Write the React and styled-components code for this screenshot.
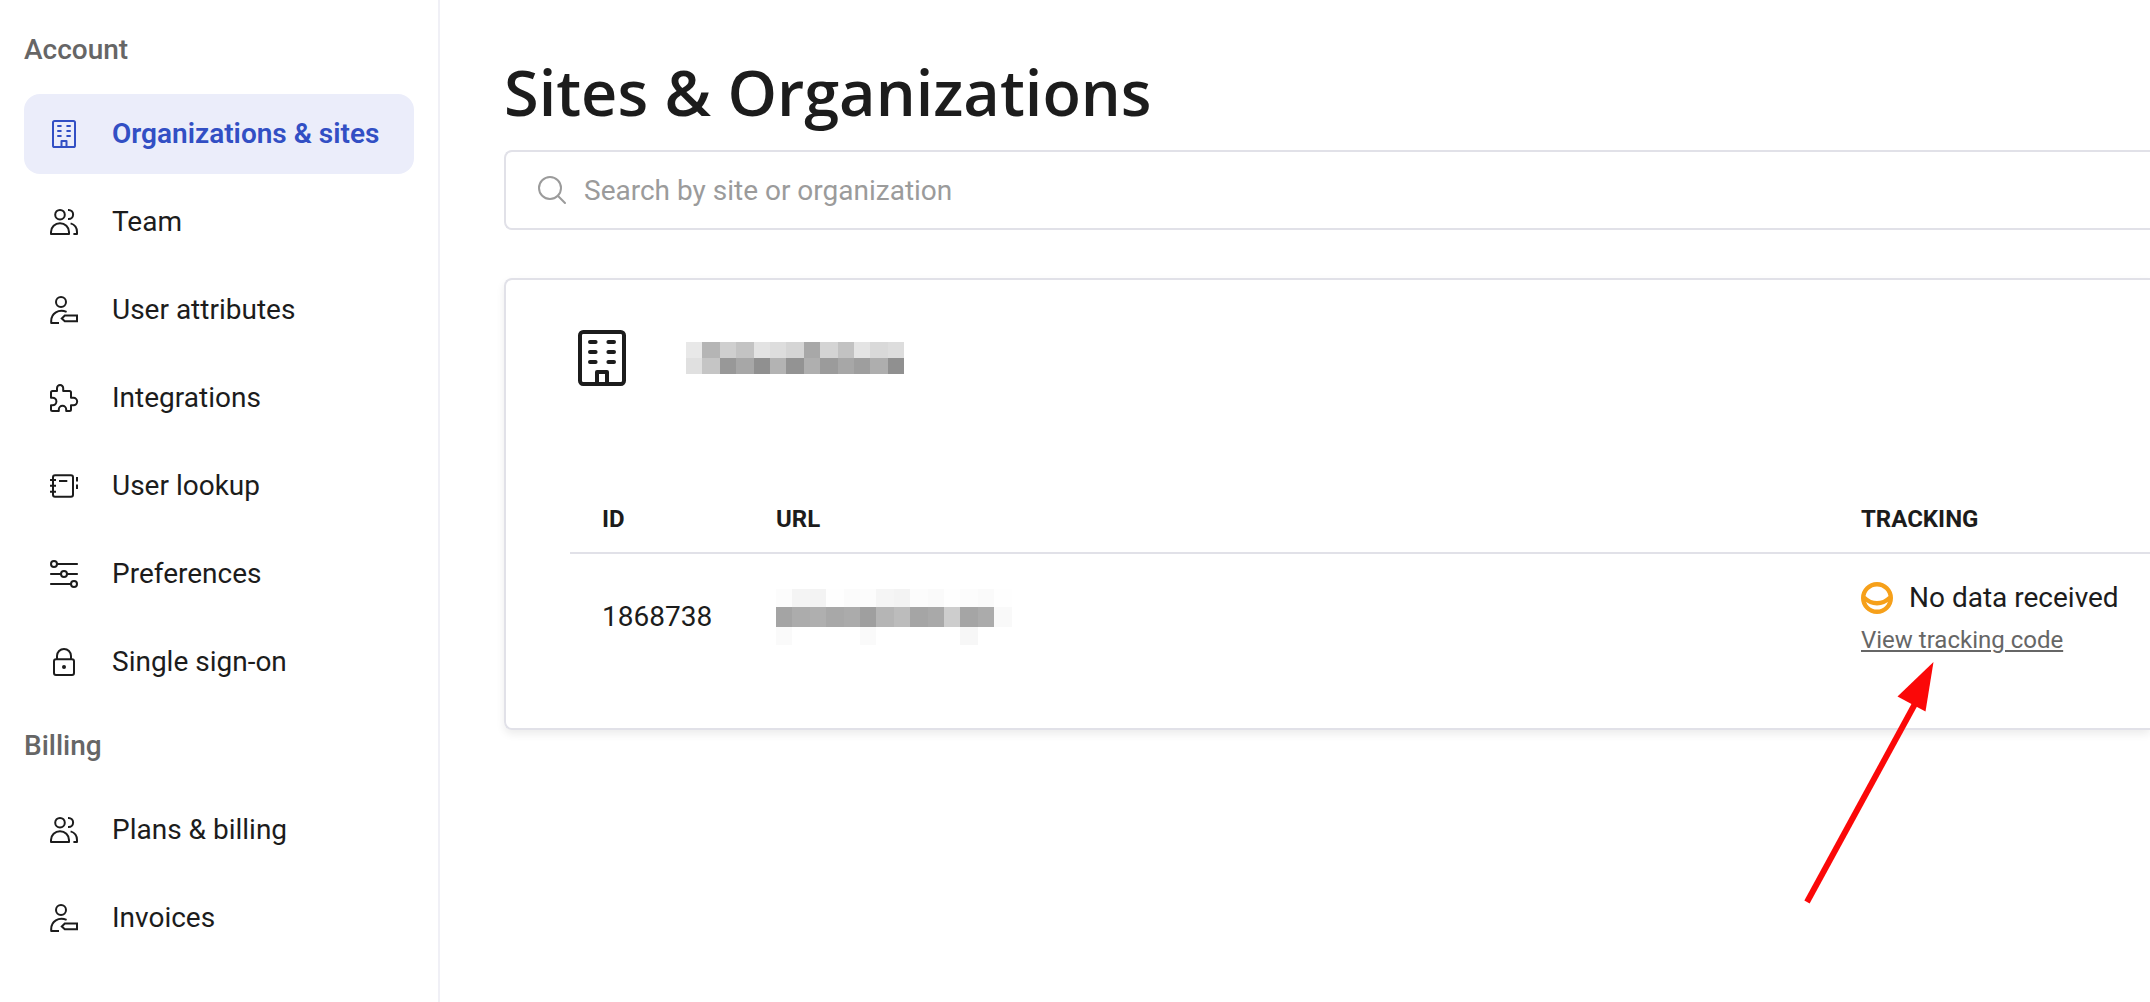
import React from "react";
import styled, { createGlobalStyle } from "styled-components";

const color = {
  ink: "#1c1c1c",
  muted: "#666666",
  placeholder: "#9b9b9b",
  line: "#e1e1e8",
  divider: "#f0f0f6",
  accent: "#324fc4",
  accentSoft: "#ebedfa",
  warning: "#f6a01a",
  arrow: "#fb0808",
};

const GlobalStyle = createGlobalStyle`
  *, *::before, *::after { box-sizing: border-box; }
  body {
    margin: 0;
    background: #ffffff;
    color: ${color.ink};
    font-family: Roboto, "Liberation Sans", sans-serif;
    font-size: 28px;
    line-height: 32px;
  }
`;

const Page = styled.div`
  display: grid;
  grid-template-columns: 440px minmax(0, 1fr);
  min-height: 100vh;
`;

const Sidebar = styled.nav`
  padding: 34px 24px 0;
  border-right: 2px solid ${color.divider};
`;

const NavSection = styled.section`
  margin-bottom: 28px;
`;

const NavHeading = styled.h2`
  margin: 0 0 28px;
  font-size: 28px;
  font-weight: 500;
  line-height: 32px;
  color: ${color.muted};
`;

const NavList = styled.ul`
  display: flex;
  flex-direction: column;
  gap: 8px;
  margin: 0;
  padding: 0;
  list-style: none;
`;

const NavLink = styled.a`
  display: flex;
  align-items: center;
  gap: 34px;
  height: 80px;
  padding: 0 26px;
  border-radius: 16px;
  color: ${(p) => (p.$active ? color.accent : color.ink)};
  background: ${(p) => (p.$active ? color.accentSoft : "transparent")};
  font-weight: ${(p) => (p.$active ? 600 : 400)};
  text-decoration: none;
  white-space: nowrap;
`;

const Glyph = styled.svg`
  flex: none;
  display: block;
  width: ${(p) => p.$size}px;
  height: ${(p) => p.$size}px;
  overflow: visible;
`;

const Main = styled.main`
  padding: 52px 0 0 64px;
`;

const Title = styled.h1`
  margin: 0 0 18px;
  font-family: "Open Sans", "Noto Sans", sans-serif;
  font-size: 63px;
  font-weight: 600;
  line-height: 80px;
`;

const SearchBox = styled.label`
  display: flex;
  align-items: center;
  gap: 18px;
  height: 80px;
  padding-left: 32px;
  border: 2px solid ${color.line};
  border-right: 0;
  border-radius: 8px 0 0 8px;
  color: ${color.placeholder};
`;

const SearchInput = styled.input`
  flex: 1;
  min-width: 0;
  padding: 2px 0 0;
  border: 0;
  outline: 0;
  background: transparent;
  color: ${color.ink};
  font: inherit;
  &::placeholder {
    color: ${color.placeholder};
    opacity: 1;
  }
`;

const Card = styled.section`
  margin-top: 48px;
  padding: 50px 0 76px 64px;
  border: 2px solid ${color.line};
  border-right: 0;
  border-radius: 8px 0 0 8px;
  box-shadow: 0 4px 8px rgba(0, 0, 0, 0.08);
`;

const CardHeader = styled.header`
  display: flex;
  align-items: center;
  gap: 56px;
  padding-left: 4px;
  margin-bottom: 100px;
`;

const SiteTable = styled.table`
  width: 100%;
  table-layout: fixed;
  border-collapse: separate;
  border-spacing: 0;
  text-align: left;
`;

const HeadCell = styled.th`
  width: ${(p) => p.$width || "auto"};
  height: 68px;
  padding: 0 0 0 32px;
  border-bottom: 2px solid ${color.line};
  font-size: 24px;
  font-weight: 700;
  line-height: 32px;
`;

const Cell = styled.td`
  padding: 28px 0 0 32px;
  vertical-align: middle;
`;

const Status = styled.div`
  display: flex;
  align-items: center;
  gap: 16px;
  white-space: nowrap;
`;

const LinkLine = styled.div`
  position: relative;
  margin-top: 14px;
`;

const TrackingLink = styled.a`
  display: block;
  color: ${color.muted};
  font-size: 24px;
  line-height: 24px;
  text-decoration: underline;
`;

const Arrow = styled.svg`
  position: absolute;
  top: 34px;
  left: -60px;
  width: 136px;
  height: 244px;
  pointer-events: none;
`;

const Mosaic = styled.div`
  display: grid;
  grid-template-columns: ${(p) => p.$columns};
  grid-template-rows: ${(p) => p.$rows};
  width: max-content;
`;

const Tile = styled.span`
  background: rgb(${(p) => `${p.$tone}, ${p.$tone}, ${p.$tone}`});
`;

function Icon({ size = 28, width = 2, children }) {
  return (
    <Glyph
      $size={size}
      viewBox="0 0 28 28"
      fill="none"
      stroke="currentColor"
      strokeWidth={width}
      strokeLinejoin="round"
      aria-hidden="true"
    >
      {children}
    </Glyph>
  );
}

const BuildingIcon = (props) => (
  <Icon {...props}>
    <rect x="3" y="1" width="22" height="26" rx="1.6" />
    <path d="M11.5 27V21h5v6" />
    <path
      strokeLinecap="round"
      d="M8 6h2.8M17.2 6H20M8 11h2.8M17.2 11H20M8 16h2.8M17.2 16H20"
    />
  </Icon>
);

const TeamIcon = () => (
  <Icon>
    <circle cx="10" cy="6.7" r="4.8" />
    <path d="M1 26v-2a9 8.8 0 0 1 18 0v2z" />
    <path d="M18 2h.6a4.5 4.5 0 0 1 0 9H18" />
    <path d="M20.6 15.4A9 9 0 0 1 27 24v2h-3.6" />
  </Icon>
);

const UserTagIcon = () => (
  <Icon>
    <circle cx="11" cy="6" r="5" />
    <path d="M16.6 15.8C8.5 12.4 1.2 17.5 1.2 25v2H9" />
    <path strokeLinejoin="miter" d="M14.8 19.6H27v5.6H14.8l-3-2.8z" />
  </Icon>
);

const PuzzleIcon = () => (
  <Icon>
    <path d="M1 13.7V8.5A1.5 1.5 0 0 1 2.5 7H7V4.2a3.1 3.2 0 0 1 6.2 0V7h6.3A1.5 1.5 0 0 1 21 8.5v5.3h2.4a3.7 3.7 0 0 1 0 7.5H21v4.2a1.5 1.5 0 0 1-1.5 1.5h-3.3v-1.5a3.7 3.7 0 0 0-7.4 0V27H2.5A1.5 1.5 0 0 1 1 25.5v-4.2h1.6a3.8 3.8 0 0 0 0-7.6z" />
  </Icon>
);

const NotebookIcon = () => (
  <Icon>
    <rect x="3" y="3.3" width="20" height="21.4" rx="2" />
    <path d="M0 8h6M0 13.8h6M0 19.7h6M9 9h8.3M27 5v4.4M27 12.5V17" />
  </Icon>
);

const SlidersIcon = () => (
  <Icon>
    <circle cx="4" cy="4" r="3" />
    <circle cx="14" cy="14" r="3" />
    <circle cx="24" cy="24" r="3" />
    <path d="M7 4h20.8M.2 14H11M17 14h10.8M.2 24H21" />
  </Icon>
);

const LockIcon = () => (
  <Icon>
    <rect x="4" y="11.3" width="20" height="15.7" rx="2" />
    <path d="M7 11V8a7 7 0 0 1 14 0v3" />
    <circle cx="14" cy="19" r="2" fill="currentColor" stroke="none" />
  </Icon>
);

const SearchIcon = () => (
  <Icon>
    <circle cx="12" cy="12" r="11" />
    <path strokeLinecap="round" d="M19.8 19.8 27 27" />
  </Icon>
);

const StatusIcon = () => (
  <Glyph $size={32} viewBox="0 0 32 32" fill="none" stroke={color.warning} strokeWidth="4.4" aria-hidden="true">
    <circle cx="16" cy="16" r="13.8" />
    <path d="M3 15.5Q9 21.3 16 21.3T29 15.5" />
  </Glyph>
);

const navigation = [
  {
    title: "Account",
    items: [
      { label: "Organizations & sites", icon: BuildingIcon, active: true },
      { label: "Team", icon: TeamIcon },
      { label: "User attributes", icon: UserTagIcon },
      { label: "Integrations", icon: PuzzleIcon },
      { label: "User lookup", icon: NotebookIcon },
      { label: "Preferences", icon: SlidersIcon },
      { label: "Single sign-on", icon: LockIcon },
    ],
  },
  {
    title: "Billing",
    items: [
      { label: "Plans & billing", icon: TeamIcon },
      { label: "Invoices", icon: UserTagIcon },
    ],
  },
];

const nameTones = [
  232, 181, 207, 195, 227, 221, 213, 168, 212, 194, 228, 217, 221,
  224, 197, 152, 167, 144, 179, 147, 175, 155, 167, 158, 174, 144,
];

const urlTones = [
  252, 244, 243, 254, 251, 252, 245, 243, 252, 250, 254, 252, 250, 254,
  164, 172, 175, 168, 171, 159, 181, 188, 165, 169, 205, 165, 171, 249,
  250, 255, 255, 255, 255, 250, 255, 255, 255, 255, 255, 247, 255, 255,
];

function Redacted({ tones, columns, rows, label }) {
  return (
    <Mosaic $columns={columns} $rows={rows} role="img" aria-label={label}>
      {tones.map((tone, i) => (
        <Tile key={i} $tone={tone} />
      ))}
    </Mosaic>
  );
}

export default function App() {
  return (
    <>
      <GlobalStyle />
      <Page>
        <Sidebar>
          {navigation.map((section) => (
            <NavSection key={section.title}>
              <NavHeading>{section.title}</NavHeading>
              <NavList>
                {section.items.map(({ label, icon: ItemIcon, active }) => (
                  <li key={label}>
                    <NavLink href="#" $active={active} aria-current={active ? "page" : undefined}>
                      <ItemIcon />
                      {label}
                    </NavLink>
                  </li>
                ))}
              </NavList>
            </NavSection>
          ))}
        </Sidebar>
        <Main>
          <Title>Sites &amp; Organizations</Title>
          <SearchBox>
            <SearchIcon />
            <SearchInput
              type="search"
              aria-label="Search by site or organization"
              placeholder="Search by site or organization"
            />
          </SearchBox>
          <Card>
            <CardHeader>
              <BuildingIcon size={56} />
              <Redacted
                tones={nameTones}
                columns="16px 18px 16px 18px 16px 16px 18px 16px 18px 16px 16px 18px 16px"
                rows="16px 16px"
                label="Organization name"
              />
            </CardHeader>
            <SiteTable>
              <thead>
                <tr>
                  <HeadCell scope="col" $width="174px">ID</HeadCell>
                  <HeadCell scope="col">URL</HeadCell>
                  <HeadCell scope="col" $width="321px">TRACKING</HeadCell>
                </tr>
              </thead>
              <tbody>
                <tr>
                  <Cell>1868738</Cell>
                  <Cell>
                    <Redacted
                      tones={urlTones}
                      columns="16px 18px 16px 18px 16px 16px 18px 16px 18px 16px 16px 18px 16px 18px"
                      rows="18px 20px 18px"
                      label="Site address"
                    />
                  </Cell>
                  <Cell>
                    <Status>
                      <StatusIcon />
                      No data received
                    </Status>
                    <LinkLine>
                      <TrackingLink href="#">View tracking code</TrackingLink>
                      <Arrow viewBox="0 0 136 244" aria-hidden="true">
                        <path d="M6 240 115 40" stroke={color.arrow} strokeWidth="6" />
                        <path d="M132.5 0 96.5 34.5 124.5 49.5z" fill={color.arrow} />
                      </Arrow>
                    </LinkLine>
                  </Cell>
                </tr>
              </tbody>
            </SiteTable>
          </Card>
        </Main>
      </Page>
    </>
  );
}
